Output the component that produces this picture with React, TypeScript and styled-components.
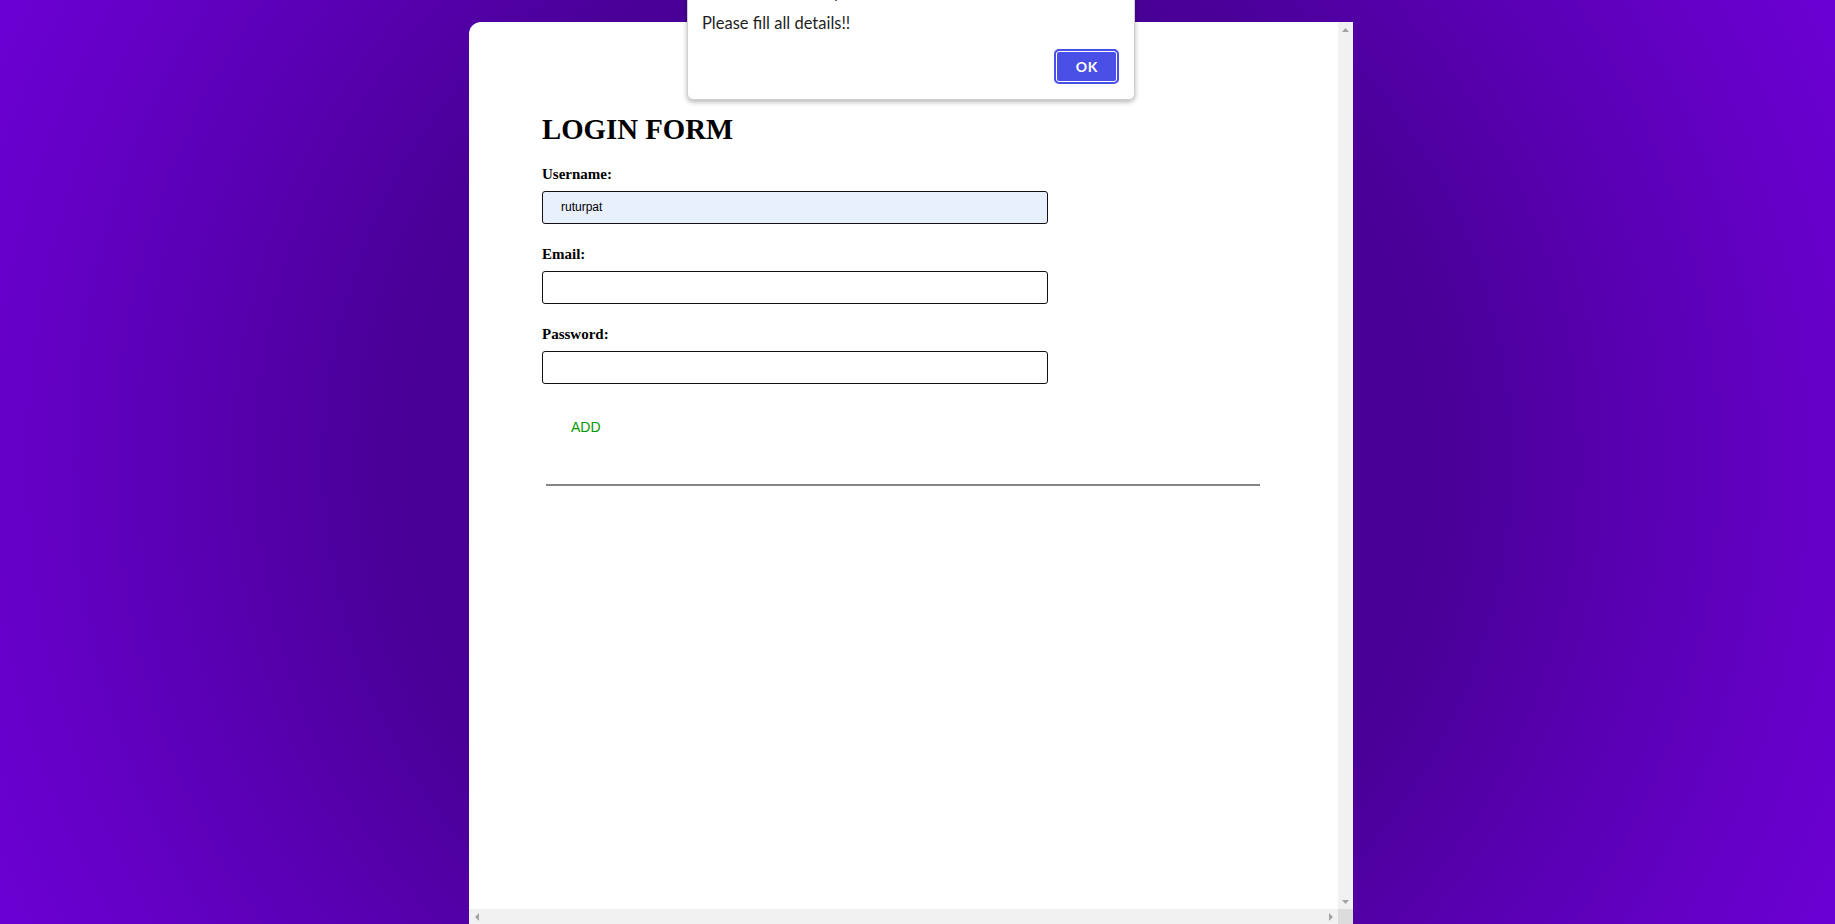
import React from "react";
import styled, { createGlobalStyle } from "styled-components";

const GlobalStyle = createGlobalStyle`
  html, body {
    margin: 0;
    padding: 0;
    height: 924px;
    overflow: hidden;
  }
  * { box-sizing: border-box; }
`;

const Page = styled.div`
  position: relative;
  width: 100vw;
  height: 924px;
  overflow: hidden;
  padding: 22px 0 0 469px;
  background: radial-gradient(circle at 50% 50%, #3a007e 0%, #4a0098 52%, #5a00b4 72%, #6c00d4 100%);
  font-family: "Liberation Serif", "Times New Roman", serif;
`;

const Panel = styled.div`
  width: 884px;
  height: 902px;
  display: grid;
  grid-template-columns: 1fr 15px;
  grid-template-rows: 1fr 15px;
  background: #ffffff;
  border-radius: 12px 0 0 0;
  overflow: hidden;
`;

const Content = styled.div`
  grid-area: 1 / 1;
  padding: 91px 0 0 73px;
  display: flex;
  flex-direction: column;
  align-items: flex-start;
`;

const Title = styled.h2`
  margin: 0;
  font-size: 28.8px;
  line-height: 33px;
  font-weight: 700;
  color: #000;
`;

const Field = styled.div<{ $gap: number }>`
  margin-top: ${(p) => p.$gap}px;
  display: flex;
  flex-direction: column;
  gap: 8px;
`;

const Label = styled.label`
  font-size: 15px;
  line-height: 17px;
  font-weight: 700;
  color: #000;
`;

const Input = styled.input<{ $filled?: boolean }>`
  width: 506px;
  height: 33px;
  margin: 0;
  padding: 0 0 0 18px;
  border: 1px solid #111;
  border-radius: 3px;
  background: ${(p) => (p.$filled ? "#e8f0fe" : "#ffffff")};
  font-family: "Liberation Sans", Arial, sans-serif;
  font-size: 12px;
  color: #000;
  outline: none;
`;

const AddButton = styled.button`
  margin: 35.75px 0 0 29px;
  padding: 0;
  border: none;
  background: transparent;
  font-family: "Liberation Sans", Arial, sans-serif;
  font-size: 14px;
  line-height: 16px;
  color: #009a00;
  cursor: pointer;
`;

const Rule = styled.div`
  margin: 48.5px 0 0 4px;
  width: 714px;
  height: 2px;
  background: #858585;
`;

const VScroll = styled.div`
  grid-area: 1 / 2;
  background: #f1f1f1;
  display: flex;
  flex-direction: column;
  justify-content: space-between;
`;

const HScroll = styled.div`
  grid-area: 2 / 1;
  background: #f1f1f1;
  display: flex;
  justify-content: space-between;
`;

const Corner = styled.div`
  grid-area: 2 / 2;
  background: #dcdcdc;
`;

const ArrowBox = styled.div`
  width: 15px;
  height: 15px;
  display: flex;
  align-items: center;
  justify-content: center;
`;

const Dialog = styled.div`
  position: absolute;
  left: 687px;
  top: -40px;
  width: 448px;
  padding: 21.4px 14.7px 14.7px 14px;
  background: #ffffff;
  border: 1px solid #d0d0d0;
  border-radius: 6px;
  box-shadow: 0 2px 5px rgba(0, 0, 0, 0.3);
  font-family: Lato, "Noto Sans", sans-serif;
  color: #1f1f1f;
  display: flex;
  flex-direction: column;
`;

const DialogText = styled.div<{ $gap?: number }>`
  margin-top: ${(p) => p.$gap ?? 0}px;
  font-size: 16.5px;
  line-height: 20px;
`;

const DialogActions = styled.div`
  margin-top: 16.6px;
  display: flex;
  justify-content: flex-end;
`;

const OkButton = styled.button`
  width: 65px;
  height: 35px;
  padding: 0;
  border: 2px solid #4a4fe6;
  border-radius: 5px;
  background: #4a4fe6;
  box-shadow: inset 0 0 0 1px #ffffff;
  color: #ffffff;
  font-family: Lato, "Noto Sans", sans-serif;
  font-weight: 700;
  font-size: 14px;
  letter-spacing: 0.5px;
  cursor: pointer;
`;

const Arrow = ({ dir }: { dir: "up" | "down" | "left" | "right" }) => {
  const pts = {
    up: "0,4 3.5,0 7,4",
    down: "0,0 7,0 3.5,4",
    left: "4,0 4,8 0,4",
    right: "0,0 0,8 4,4",
  }[dir];
  const vertical = dir === "up" || dir === "down";
  return (
    <ArrowBox>
      <svg width={vertical ? 7 : 4} height={vertical ? 4 : 8} viewBox={vertical ? "0 0 7 4" : "0 0 4 8"}>
        <polygon points={pts} fill="#a3a3a3" />
      </svg>
    </ArrowBox>
  );
};

export default function App() {
  return (
    <>
      <GlobalStyle />
      <Page>
        <Panel>
          <Content>
            <Title>LOGIN FORM</Title>
            <Field $gap={19.7}>
              <Label>Username:</Label>
              <Input $filled defaultValue="ruturpat" />
            </Field>
            <Field $gap={22}>
              <Label>Email:</Label>
              <Input type="email" />
            </Field>
            <Field $gap={22}>
              <Label>Password:</Label>
              <Input type="password" />
            </Field>
            <AddButton>ADD</AddButton>
            <Rule />
          </Content>
          <VScroll>
            <Arrow dir="up" />
            <Arrow dir="down" />
          </VScroll>
          <HScroll>
            <Arrow dir="left" />
            <Arrow dir="right" />
          </HScroll>
          <Corner />
        </Panel>
        <Dialog role="alertdialog">
          <DialogText>127.0.0.1:5500 says</DialogText>
          <DialogText $gap={10.3}>Please fill all details!!</DialogText>
          <DialogActions>
            <OkButton>OK</OkButton>
          </DialogActions>
        </Dialog>
      </Page>
    </>
  );
}
